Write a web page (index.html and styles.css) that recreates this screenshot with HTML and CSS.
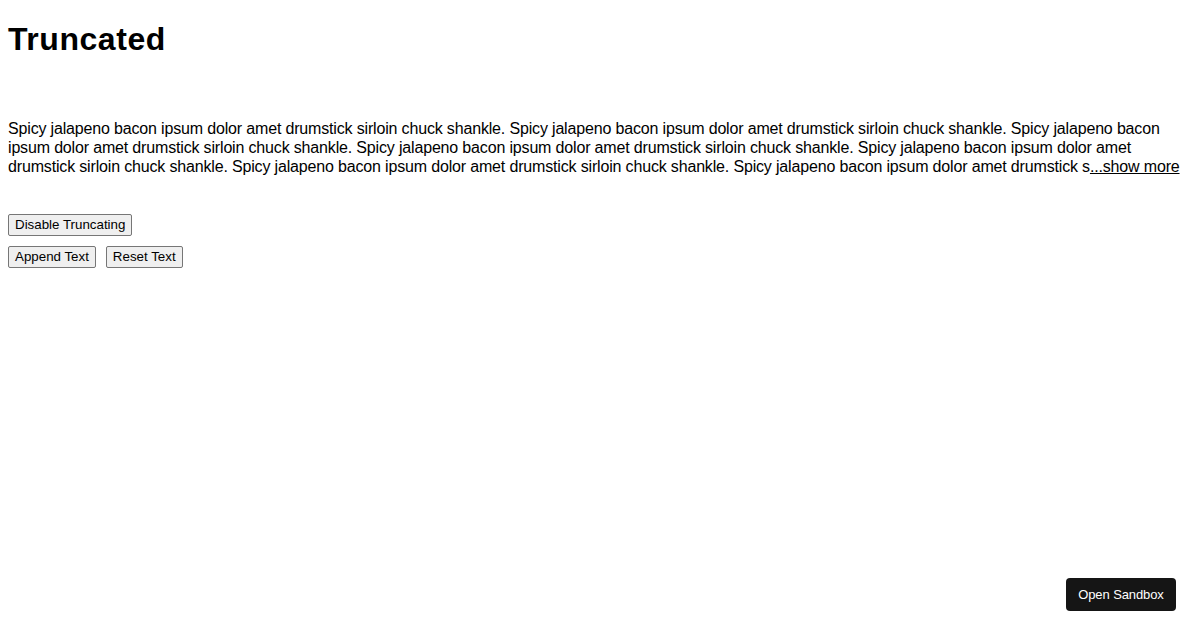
FILE: index.html
```html
<!DOCTYPE html>
<html>
<head>
<meta charset="utf-8">
<link rel="stylesheet" href="styles.css">
</head>
<body>
<main class="page">
  <h1 class="title">Truncated</h1>
  <div class="truncate">
    <div class="line">Spicy jalapeno bacon ipsum dolor amet drumstick sirloin chuck shankle. Spicy jalapeno bacon ipsum dolor amet drumstick sirloin chuck shankle. Spicy jalapeno bacon</div>
    <div class="line">ipsum dolor amet drumstick sirloin chuck shankle. Spicy jalapeno bacon ipsum dolor amet drumstick sirloin chuck shankle. Spicy jalapeno bacon ipsum dolor amet</div>
    <div class="line last"><span class="clip">drumstick sirloin chuck shankle. Spicy jalapeno bacon ipsum dolor amet drumstick sirloin chuck shankle. Spicy jalapeno bacon ipsum dolor amet drumstick s</span><a class="more" href="#">...show more</a></div>
  </div>
  <div class="controls">
    <div class="row"><button class="btn">Disable Truncating</button></div>
    <div class="row"><button class="btn">Append Text</button><button class="btn">Reset Text</button></div>
  </div>
</main>
<button class="sandbox">Open Sandbox</button>
</body>
</html>
```
FILE: styles.css
```css
html, body {
  margin: 0;
  padding: 0;
  background: #ffffff;
}
body {
  font-family: "Liberation Sans", Arial, sans-serif;
  color: #000;
  padding: 8px;
}
.page {
  display: flex;
  flex-direction: column;
}
.title {
  font-size: 32px;
  font-weight: bold;
  line-height: 37px;
  letter-spacing: 0.55px;
  margin: 13px 0 0 0;
}
.truncate {
  margin-top: 61px;
  font-size: 16px;
  line-height: 19px;
  letter-spacing: -0.165px;
}
.line {
  white-space: nowrap;
}
.last {
  display: flex;
}
.more {
  color: #000;
  text-decoration: underline;
}
.controls {
  margin-top: 38px;
  display: flex;
  flex-direction: column;
  gap: 10px;
}
.row {
  display: flex;
  gap: 10px;
}
.btn {
  font-family: "Liberation Sans", Arial, sans-serif;
  font-size: 13.33px;
  line-height: 16px;
  padding: 2px 6px;
  margin: 0;
  background: #efefef;
  border: 1px solid #767676;
  border-radius: 2px;
  color: #000;
}
.sandbox {
  position: fixed;
  right: 24px;
  bottom: 19px;
  width: 110px;
  height: 33px;
  background: #151515;
  color: #fff;
  border: none;
  border-radius: 4px;
  font-family: "Liberation Sans", Arial, sans-serif;
  font-size: 13px;
  letter-spacing: -0.1px;
  padding: 0;
}
```
